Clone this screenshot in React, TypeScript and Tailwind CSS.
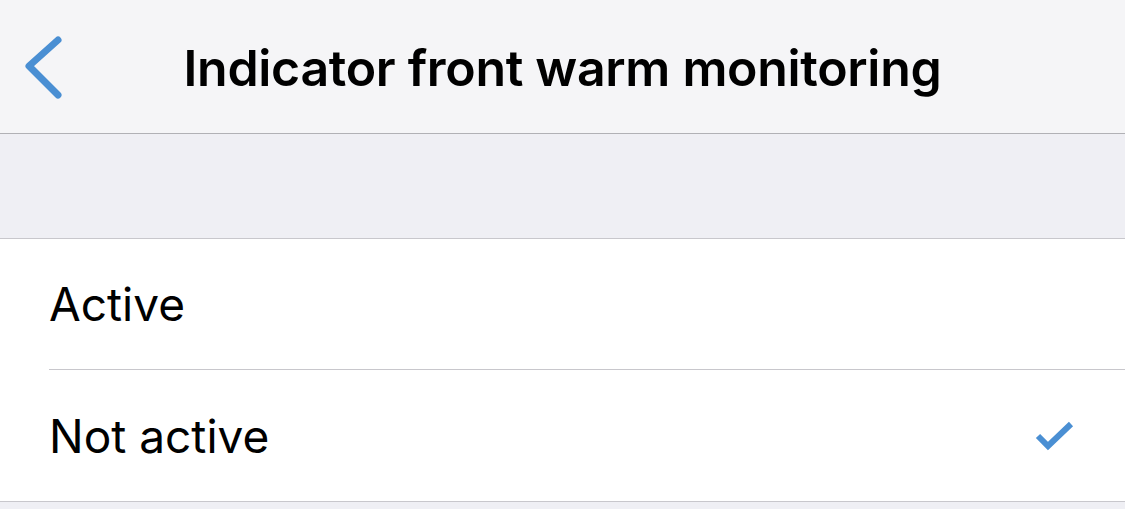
import React from 'react';

// Settings detail page: nav bar with back chevron, grouped list with a checked option.
const options = [
  { label: 'Active', checked: false },
  { label: 'Not active', checked: true },
];

export default function App() {
  return (
    <div className="w-[1125px] h-[509px] bg-[#efeff4] overflow-hidden font-['Inter',sans-serif] text-black">
      {/* Navigation bar */}
      <div className="relative h-[134px] bg-[#f5f5f7] border-b border-[#b1b1b5] flex items-center justify-center">
        <button type="button" className="absolute left-[24px] top-[34px]" aria-label="Back">
          <svg width="44" height="68" viewBox="0 0 44 68" fill="none">
            <path d="M34 6 L5 32 L34 61" stroke="#4a8fd3" strokeWidth="7" strokeLinecap="round" strokeLinejoin="round" />
          </svg>
        </button>
        <h1 className="text-[50px] font-semibold tracking-[-0.3px] mt-[3px]">Indicator front warm monitoring</h1>
      </div>

      {/* Section spacer */}
      <div className="h-[104px]" />

      {/* Option list */}
      <div className="bg-white border-t border-b border-[#c8c7cc]">
        {options.map((o, i) => (
          <div key={o.label} className="pl-[49px]">
            <div
              className={
                'h-[131px] flex items-center pr-[50px] ' +
                (i < options.length - 1 ? 'border-b border-[#c8c7cc]' : '')
              }
            >
              <span className="flex-1 text-[46px] leading-none">{o.label}</span>
              {o.checked && (
                <svg width="40" height="32" viewBox="0 0 40 32" fill="none">
                  <path d="M3 16 L13 26 L36 4" stroke="#4a8fd3" strokeWidth="6" />
                </svg>
              )}
            </div>
          </div>
        ))}
      </div>
    </div>
  );
}
